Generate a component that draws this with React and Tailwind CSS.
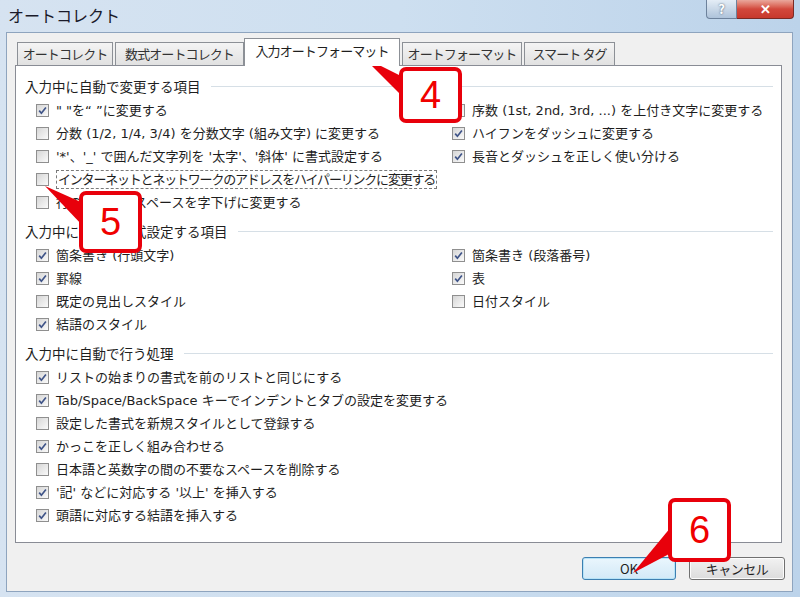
import React from 'react';

const jp = { fontFamily: '"Noto Sans CJK JP", "Noto Sans", sans-serif' };
const itemFont = { fontFamily: '"DejaVu Sans", "Noto Sans CJK JP", sans-serif' };

const Check = ({ checked }) => (
  <span className="w-[13px] h-[13px] shrink-0 border border-[#8f8f8f] bg-gradient-to-br from-[#d6d6d6] to-[#fafafa] flex items-center justify-center">
    {checked && (
      <svg width="9" height="9" viewBox="0 0 9 9">
        <path d="M1.2 4.6 L3.4 7.2 L7.9 1.4" stroke="#3f5488" strokeWidth="1.7" fill="none" />
      </svg>
    )}
  </span>
);

const Item = ({ label, checked, focus }) => (
  <div className="h-[23px] flex items-center gap-[7px] whitespace-nowrap">
    <Check checked={checked} />
    <span
      className={focus ? 'border border-dashed border-[#7a7a7a] px-px leading-[17px] tracking-[-1.2px]' : ''}
      style={itemFont}
    >
      {label}
    </span>
  </div>
);

const Header = ({ children }) => (
  <div className="h-[22px] flex items-center gap-[10px]">
    <span>{children}</span>
    <div className="flex-1 h-px bg-[#d6dfe6]" />
  </div>
);

const Tab = ({ label, w, active, className = '' }) => (
  <div
    className={
      'flex items-center justify-center border border-[#8c9096] text-[13px] tracking-[-0.9px] whitespace-nowrap ' +
      (active
        ? 'h-[28px] bg-white border-b-0 pb-[3px]'
        : 'h-[23px] mb-px border-b-0 bg-gradient-to-b from-[#f4f4f4] to-[#e1e1e1] text-[#333] ') +
      className
    }
    style={{ width: w }}
  >
    {label}
  </div>
);

const sec1 = [
  ['" "を“ ”に変更する', true],
  ['序数 (1st, 2nd, 3rd, ...) を上付き文字に変更する', false],
  ['分数 (1/2, 1/4, 3/4) を分数文字 (組み文字) に変更する', false],
  ['ハイフンをダッシュに変更する', true],
  ["'*'、'_' で囲んだ文字列を '太字'、'斜体' に書式設定する", false],
  ['長音とダッシュを正しく使い分ける', true],
  ['インターネットとネットワークのアドレスをハイパーリンクに変更する', false, true],
  null,
  ['行の始まりのスペースを字下げに変更する', false],
  null,
];

const sec2 = [
  ['箇条書き (行頭文字)', true],
  ['箇条書き (段落番号)', true],
  ['罫線', true],
  ['表', true],
  ['既定の見出しスタイル', false],
  ['日付スタイル', false],
  ['結語のスタイル', true],
  null,
];

const sec3 = [
  ['リストの始まりの書式を前のリストと同じにする', true],
  ['Tab/Space/BackSpace キーでインデントとタブの設定を変更する', true],
  ['設定した書式を新規スタイルとして登録する', false],
  ['かっこを正しく組み合わせる', true],
  ['日本語と英数字の間の不要なスペースを削除する', false],
  ["'記' などに対応する '以上' を挿入する", true],
  ['頭語に対応する結語を挿入する', true],
];

const Callout = ({ n, className }) => (
  <div
    className={
      'absolute bg-white border-[4px] border-[#e8000b] rounded-[7px] flex items-center justify-center text-[#f00000] text-[38px] leading-none ' +
      className
    }
    style={{ fontFamily: '"Liberation Sans", Arial, sans-serif' }}
  >
    {n}
  </div>
);

export default function App() {
  return (
    <div className="relative w-[800px] h-[597px] overflow-hidden bg-gradient-to-r from-[#d6e3f1] via-[#cddff0] to-[#bcd3ea] text-[13.5px] text-[#1e1e1e]" style={jp}>
      {/* title bar */}
      <div className="h-[32px] flex items-start justify-between">
        <div className="pl-[8px] pt-[3px] text-[16px] text-[#1a1a2a]">オートコレクト</div>
        <div className="flex mr-[6px]">
          <div className="w-[31px] h-[19px] rounded-bl-[4px] border border-t-0 border-[#6d829c] bg-gradient-to-b from-[#e4edf6] to-[#aec3da] flex items-center justify-center text-white text-[13px] font-bold [text-shadow:0_0_2px_#3a4a60]">
            ?
          </div>
          <div className="w-[57px] h-[19px] rounded-br-[4px] border border-t-0 border-l-0 border-[#7a2a24] bg-gradient-to-b from-[#e9a79c] via-[#d2483c] to-[#c7392d] flex items-center justify-center text-white text-[13px] font-bold">
            ✕
          </div>
        </div>
      </div>

      {/* client */}
      <div className="ml-[6px] mr-[7px] h-[560px] bg-[#f0f0f0] border border-[#8ea4be] pt-[5px] pl-[8px] pr-[10px]">
        <div className="relative z-10 h-[28px] -mb-px flex items-end pl-[2px]">
          <Tab label="オートコレクト" w={96} className="mr-[2px]" />
          <Tab label="数式オートコレクト" w={129} />
          <Tab label="入力オートフォーマット" w={156} active />
          <Tab label="オートフォーマット" w={120} className="ml-[2px]" />
          <Tab label="スマート タグ" w={91} className="ml-[2px]" />
        </div>

        <div className="h-[478px] bg-white border border-[#898c95] pt-[9px] pl-[9px] pr-[8px]">
          <Header>入力中に自動で変更する項目</Header>
          <div className="grid grid-cols-[416px_1fr] pl-[11px] pt-[2px] text-[13px]">
            {sec1.map((it, i) => (it ? <Item key={i} label={it[0]} checked={it[1]} focus={it[2]} /> : <div key={i} />))}
          </div>

          <div className="mt-[6px]">
            <Header>入力中に自動で書式設定する項目</Header>
            <div className="grid grid-cols-[416px_1fr] pl-[11px] pt-[2px] text-[13px]">
              {sec2.map((it, i) => (it ? <Item key={i} label={it[0]} checked={it[1]} /> : <div key={i} />))}
            </div>
          </div>

          <div className="mt-[6px]">
            <Header>入力中に自動で行う処理</Header>
            <div className="flex flex-col pl-[11px] pt-[2px] text-[13px]">
              {sec3.map((it, i) => (
                <Item key={i} label={it[0]} checked={it[1]} />
              ))}
            </div>
          </div>
        </div>

        <div className="flex justify-end gap-[13px] mt-[14px] -mr-[3px] text-[13px]">
          <button className="w-[94px] h-[23px] rounded-[3px] border border-[#3c7fb1] bg-gradient-to-b from-[#eaf6fd] to-[#d2e9f7] shadow-[inset_0_0_0_1px_#b7e3f7] flex items-center justify-center">
            OK
          </button>
          <button className="w-[96px] h-[23px] rounded-[3px] border border-[#707070] bg-gradient-to-b from-[#f2f2f2] to-[#dcdcdc] shadow-[inset_0_0_0_1px_#fcfcfc] flex items-center justify-center tracking-[-0.5px]">
            キャンセル
          </button>
        </div>
      </div>

      {/* callout pointers */}
      <svg className="absolute inset-0 pointer-events-none" width="800" height="597">
        <polygon points="363,57 403,77 403,97" fill="#e8000b" />
        <polygon points="45,186 83,203 83,226" fill="#e8000b" />
        <polygon points="633,573 671,527 671,553" fill="#e8000b" />
      </svg>
      <Callout n="4" className="left-[399px] top-[67px] w-[63px] h-[56px]" />
      <Callout n="5" className="left-[79px] top-[191px] w-[63px] h-[62px]" />
      <Callout n="6" className="left-[668px] top-[498px] w-[63px] h-[64px]" />
    </div>
  );
}
